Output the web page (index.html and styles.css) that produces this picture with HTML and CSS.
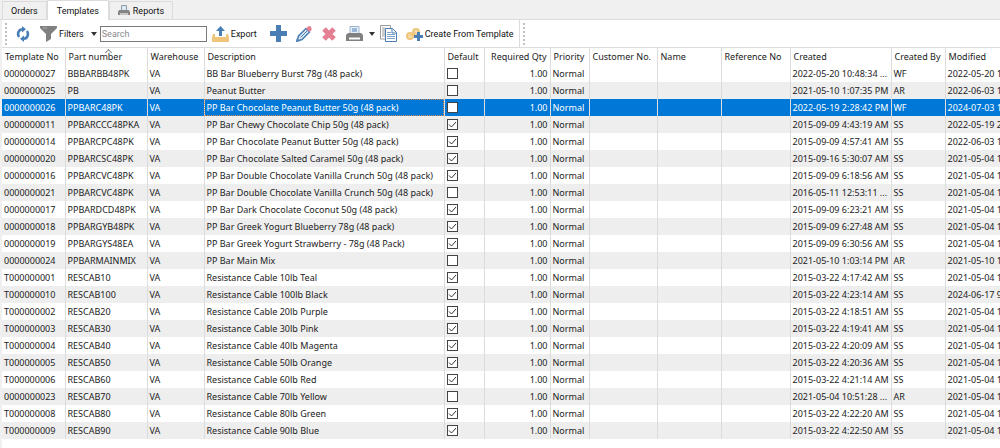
FILE: index.html
```html
<!doctype html>
<html lang="en">
<head>
    <meta charset="utf-8">
    <meta name="viewport" content="width=device-width, initial-scale=1.0">
    <title>Templates</title>
    <link rel="stylesheet" href="styles.css">
</head>
<body>
    <nav class="tabs">
        <button type="button" class="tab">Orders</button>
        <button type="button" class="tab active">Templates</button>
        <button type="button" class="tab">
            <svg viewBox="0 0 12 12" width="12" height="12"><path d="M3.5.5h5v5h-5z" fill="#dfe9f3" stroke="#8a9bab"/><path d="M1 5h10l1 2v3H0V7z" fill="#858585"/><path d="M2 8h8v2H2z" fill="#c8c8c8"/></svg>
            Reports
        </button>
    </nav>
    <main class="panel">
        <div class="toolbar">
            <div class="tools">
                <span class="grip"></span>
                <button type="button" class="tool refresh" aria-label="Refresh">
                    <svg viewBox="0 0 14 16" width="14" height="16"><path d="M6 3.2A4.8 4.8 0 0 0 3.2 11M8 12.8A4.8 4.8 0 0 0 10.8 5" fill="none" stroke="#4a7fb5" stroke-width="2.6"/><path d="M6 0l4 3.3-4 3.3zM8 9.4v6.6l-4-3.3z" fill="#4a7fb5"/></svg>
                </button>
                <button type="button" class="tool filters">
                    <svg viewBox="0 0 17 16" width="17" height="16"><path d="M0 0h17v2l-6 6v5l-5 3V8L0 2z" fill="#808080"/><path d="M3 2h4" stroke="#b5b5b5"/></svg>
                    Filters
                    <span class="caret"></span>
                </button>
                <input type="text" class="search" placeholder="Search" aria-label="Search">
                <button type="button" class="tool">
                    <svg viewBox="0 0 17 16" width="17" height="16"><path d="M1 8h2v3h11V8h2l1 3v5H0v-5z" fill="#efc47b"/><path d="M8.5 0L13 5h-3v5H7V5H4z" fill="#4a7fb5"/></svg>
                    Export
                </button>
                <button type="button" class="tool add" aria-label="Add">
                    <svg viewBox="0 0 17 17" width="17" height="17"><path d="M6 0h5v6h6v5h-6v6H6v-6H0V6h6z" fill="#4a7fb5"/></svg>
                </button>
                <button type="button" class="tool edit" aria-label="Edit">
                    <svg viewBox="0 0 16 16" width="16" height="16"><path d="M1 15l1.5-5L10 2.5 13.5 6 6 13.5z" fill="#dce8f4" stroke="#4a7fb5" stroke-width="1.5"/><path d="M4.5 11.5l7-7" stroke="#4a7fb5"/><path d="M10 2.5L12 .5q2-1 3 .5t.5 3l-2 2z" fill="#e57f92"/><path d="M0 16l1-4 3 3z" fill="#4a7fb5"/></svg>
                </button>
                <button type="button" class="tool delete" aria-label="Delete">
                    <svg viewBox="0 0 16 16" width="16" height="16"><path d="M3 3l10 10M13 3L3 13" stroke="#e57f92" stroke-width="5"/></svg>
                </button>
                <button type="button" class="tool print" aria-label="Print">
                    <svg viewBox="0 0 17 16" width="17" height="16"><path d="M4 .5h9V8H4z" fill="#e8f1fa" stroke="#9ab4d0"/><path d="M6 3h5M6 5h5" stroke="#4a7fb5"/><path d="M2 7h13l2 2v6H0V9z" fill="#808080"/><path d="M3 11.5h11v2H3z" fill="#fff"/></svg>
                    <span class="caret"></span>
                </button>
                <button type="button" class="tool copy" aria-label="Copy">
                    <svg viewBox="0 0 17 17" width="17" height="17"><path d="M.5.5h10V14H.5z" fill="#fff" stroke="#999"/><path d="M2 3h3M2 5h3M2 7h3M2 9h3M2 11h3" stroke="#999"/><path d="M5.5 3.5h7l4 4v9h-11z" fill="#fff" stroke="#4a7fb5"/><path d="M12 4v4h4" fill="none" stroke="#4a7fb5"/><path d="M7 7.5h4M7 9.5h8M7 11.5h8M7 13.5h8" stroke="#7fa5cc"/></svg>
                </button>
                <button type="button" class="tool create">
                    <svg viewBox="0 0 17 14" width="17" height="14"><g fill="#f7dfb2" stroke="#efc47b" stroke-width="2"><circle cx="4" cy="9" r="3"/><circle cx="10" cy="5" r="3"/></g><path d="M3 9l7-4" stroke="#efc47b"/><path d="M11 5h3v3h3v3h-3v3h-3v-3H8V8h3z" fill="#4a7fb5"/></svg>
                    Create From Template
                </button>
            </div>
            <span class="grip"></span>
        </div>
        <table class="grid">
            <colgroup>
                <col class="c-no"><col class="c-part"><col class="c-wh"><col class="c-desc"><col class="c-def"><col class="c-qty"><col class="c-pri">
                <col class="c-cust"><col class="c-name"><col class="c-ref"><col class="c-created"><col class="c-by"><col class="c-mod">
            </colgroup>
            <thead>
                <tr><th>Template No</th><th class="sorted">Part number</th><th>Warehouse</th><th>Description</th><th>Default</th><th class="num">Required Qty</th><th>Priority</th><th>Customer No.</th><th>Name</th><th>Reference No</th><th>Created</th><th>Created By</th><th>Modified</th></tr>
            </thead>
            <tbody id="rows"></tbody>
        </table>
    </main>
    <script src="script.js"></script>
</body>
</html>
```
FILE: styles.css
```css
* {
    box-sizing: border-box;
}
body {
    margin: 0;
    min-height: 100vh;
    display: flex;
    flex-direction: column;
    background: #f0f0f0;
    color: #222;
    font: 9px/16px "Noto Sans", sans-serif;
    overflow: hidden;
}
button {
    font: inherit;
    color: inherit;
    background: none;
    border: 0;
    padding: 0;
}
.tabs, .toolbar {
    font-family: Roboto, sans-serif;
    color: #111;
}
.tabs {
    display: flex;
    align-items: flex-end;
    height: 20px;
    padding-left: 2px;
    border-bottom: 1px solid #dcdcdc;
}
.tab {
    display: flex;
    align-items: center;
    gap: 3px;
    height: 18px;
    padding: 0 8px;
    border: 1px solid #dcdcdc;
    border-bottom: 0;
}
.tab.active {
    height: 20px;
    padding: 0 9px;
    margin-bottom: -1px;
    background: #fff;
}
.panel {
    flex: 1;
    margin-left: 2px;
    background: #fff;
    overflow: hidden;
}
.toolbar {
    display: flex;
    height: 28px;
    border-bottom: 1px solid #dcdcdc;
}
.tools {
    display: flex;
    align-items: center;
    padding-right: 5px;
    border-right: 1px solid #dcdcdc;
}
.tool {
    display: flex;
    align-items: center;
    gap: 2px;
}
.grip {
    align-self: center;
    width: 2px;
    height: 22px;
    margin-left: 3px;
    border-left: 2px dotted #c0c0c0;
}
.caret {
    border: 3px solid transparent;
    border-top: 4px solid #333;
    border-bottom: 0;
}
.refresh, .create {
    margin-left: 9px;
}
.filters {
    margin-left: 10px;
}
.filters .caret {
    margin-left: 5px;
}
.search {
    width: 107px;
    height: 16px;
    margin: 0 5px 0 3px;
    padding: 0 1px;
    border: 1px solid #7a7a7a;
    font: inherit;
}
.search::placeholder {
    color: #8a8a8a;
}
.add {
    margin-left: 13px;
}
.edit, .delete, .print {
    margin-left: 9px;
}
.print .caret {
    margin-left: 4px;
}
.copy {
    margin-left: 5px;
}
.grid {
    width: 100%;
    table-layout: fixed;
    border-collapse: collapse;
}
.c-no { width: 63px; }
.c-part { width: 82px; }
.c-wh { width: 57px; }
.c-desc { width: 240px; }
.c-def { width: 40px; }
.c-qty { width: 66px; }
.c-pri { width: 39px; }
.c-cust { width: 68px; }
.c-name { width: 64px; }
.c-ref { width: 69px; }
.c-created { width: 101px; }
.c-by { width: 54px; }
.grid th, .grid td {
    height: 17px;
    padding: 0 2px;
    border-right: 1px solid #dcdcdc;
    text-align: left;
    font-weight: normal;
    white-space: nowrap;
    overflow: hidden;
}
.grid th {
    padding: 0 3px;
    position: relative;
}
.grid .num {
    text-align: right;
}
.grid th:last-child, .grid td:last-child {
    border-right: 0;
}
.sorted::before {
    content: "";
    position: absolute;
    top: 2px;
    left: 50%;
    width: 4px;
    height: 4px;
    border: solid #888;
    border-width: 1px 0 0 1px;
    transform: rotate(45deg);
}
.grid tbody tr:nth-child(even) {
    background: #eee;
}
.grid tbody tr.selected {
    background: #0078d7;
    color: #fff;
}
.selected .focus {
    outline: 1px dotted #d98a4b;
    outline-offset: -1px;
}
.check {
    display: block;
    appearance: none;
    width: 11px;
    height: 11px;
    margin: 0;
    border: 1px solid #444;
    background: #fff;
}
.check:checked {
    background: #fff url("data:image/svg+xml,%3Csvg xmlns='http://www.w3.org/2000/svg' viewBox='0 0 9 9'%3E%3Cpath d='M1 4.5L3.5 7 8 2' fill='none' stroke='%23333'/%3E%3C/svg%3E");
}
```
FILE: script.js
```js
// template no, part number, description, default, created, created by, modified
const templates = [
    ['0000000027', 'BBBARBB48PK', 'BB Bar Blueberry Burst 78g (48 pack)', 0, '2022-05-20 10:48:34 ...', 'WF', '2022-05-20 1'],
    ['0000000025', 'PB', 'Peanut Butter', 0, '2021-05-10 1:07:35 PM', 'AR', '2022-06-03 1'],
    ['0000000026', 'PPBARC48PK', 'PP Bar Chocolate Peanut Butter 50g (48 pack)', 0, '2022-05-19 2:28:42 PM', 'WF', '2024-07-03 1'],
    ['0000000011', 'PPBARCCC48PKA', 'PP Bar Chewy Chocolate Chip 50g (48 pack)', 1, '2015-09-09 4:43:19 AM', 'SS', '2022-05-19 2'],
    ['0000000014', 'PPBARCPC48PK', 'PP Bar Chocolate Peanut Butter 50g (48 pack)', 1, '2015-09-09 4:57:41 AM', 'SS', '2022-06-03 1'],
    ['0000000020', 'PPBARCSC48PK', 'PP Bar Chocolate Salted Caramel 50g (48 pack)', 1, '2015-09-16 5:30:07 AM', 'SS', '2021-05-04 1'],
    ['0000000016', 'PPBARCVC48PK', 'PP Bar Double Chocolate Vanilla Crunch 50g (48 pack)', 1, '2015-09-09 6:18:56 AM', 'SS', '2021-05-04 1'],
    ['0000000021', 'PPBARCVC48PK', 'PP Bar Double Chocolate Vanilla Crunch 50g (48 pack)', 0, '2016-05-11 12:53:11 ...', 'SS', '2021-05-04 1'],
    ['0000000017', 'PPBARDCD48PK', 'PP Bar Dark Chocolate Coconut 50g (48 pack)', 1, '2015-09-09 6:23:21 AM', 'SS', '2021-05-04 1'],
    ['0000000018', 'PPBARGYB48PK', 'PP Bar Greek Yogurt Blueberry 78g (48 pack)', 1, '2015-09-09 6:27:48 AM', 'SS', '2021-05-04 1'],
    ['0000000019', 'PPBARGYS48EA', 'PP Bar Greek Yogurt Strawberry - 78g (48 Pack)', 1, '2015-09-09 6:30:56 AM', 'SS', '2021-05-04 1'],
    ['0000000024', 'PPBARMAINMIX', 'PP Bar Main Mix', 0, '2021-05-10 1:03:14 PM', 'AR', '2021-05-10 1'],
    ['T000000001', 'RESCAB10', 'Resistance Cable 10lb Teal', 1, '2015-03-22 4:17:42 AM', 'SS', '2021-05-04 1'],
    ['T000000010', 'RESCAB100', 'Resistance Cable 100lb Black', 1, '2015-03-22 4:23:14 AM', 'SS', '2024-06-17 9'],
    ['T000000002', 'RESCAB20', 'Resistance Cable 20lb Purple', 1, '2015-03-22 4:18:51 AM', 'SS', '2021-05-04 1'],
    ['T000000003', 'RESCAB30', 'Resistance Cable 30lb Pink', 1, '2015-03-22 4:19:41 AM', 'SS', '2021-05-04 1'],
    ['T000000004', 'RESCAB40', 'Resistance Cable 40lb Magenta', 1, '2015-03-22 4:20:09 AM', 'SS', '2021-05-04 1'],
    ['T000000005', 'RESCAB50', 'Resistance Cable 50lb Orange', 1, '2015-03-22 4:20:36 AM', 'SS', '2021-05-04 1'],
    ['T000000006', 'RESCAB60', 'Resistance Cable 60lb Red', 1, '2015-03-22 4:21:14 AM', 'SS', '2021-05-04 1'],
    ['0000000023', 'RESCAB70', 'Resistance Cable 70lb Yellow', 0, '2021-05-04 10:51:28 ...', 'AR', '2021-05-04 1'],
    ['T000000008', 'RESCAB80', 'Resistance Cable 80lb Green', 1, '2015-03-22 4:22:20 AM', 'SS', '2021-05-04 1'],
    ['T000000009', 'RESCAB90', 'Resistance Cable 90lb Blue', 1, '2015-03-22 4:22:50 AM', 'SS', '2021-05-04 1']
];

document.getElementById('rows').innerHTML = templates.map(([no, part, desc, isDefault, created, by, modified]) => `
    <tr class="${no === '0000000026' ? 'selected' : ''}">
        <td>${no}</td><td>${part}</td><td>VA</td><td class="focus">${desc}</td>
        <td><input type="checkbox" class="check" aria-label="Default ${no}" ${isDefault ? 'checked' : ''}></td>
        <td class="num">1.00</td><td>Normal</td><td></td><td></td><td></td>
        <td>${created}</td><td>${by}</td><td>${modified}</td>
    </tr>`).join('');
```
